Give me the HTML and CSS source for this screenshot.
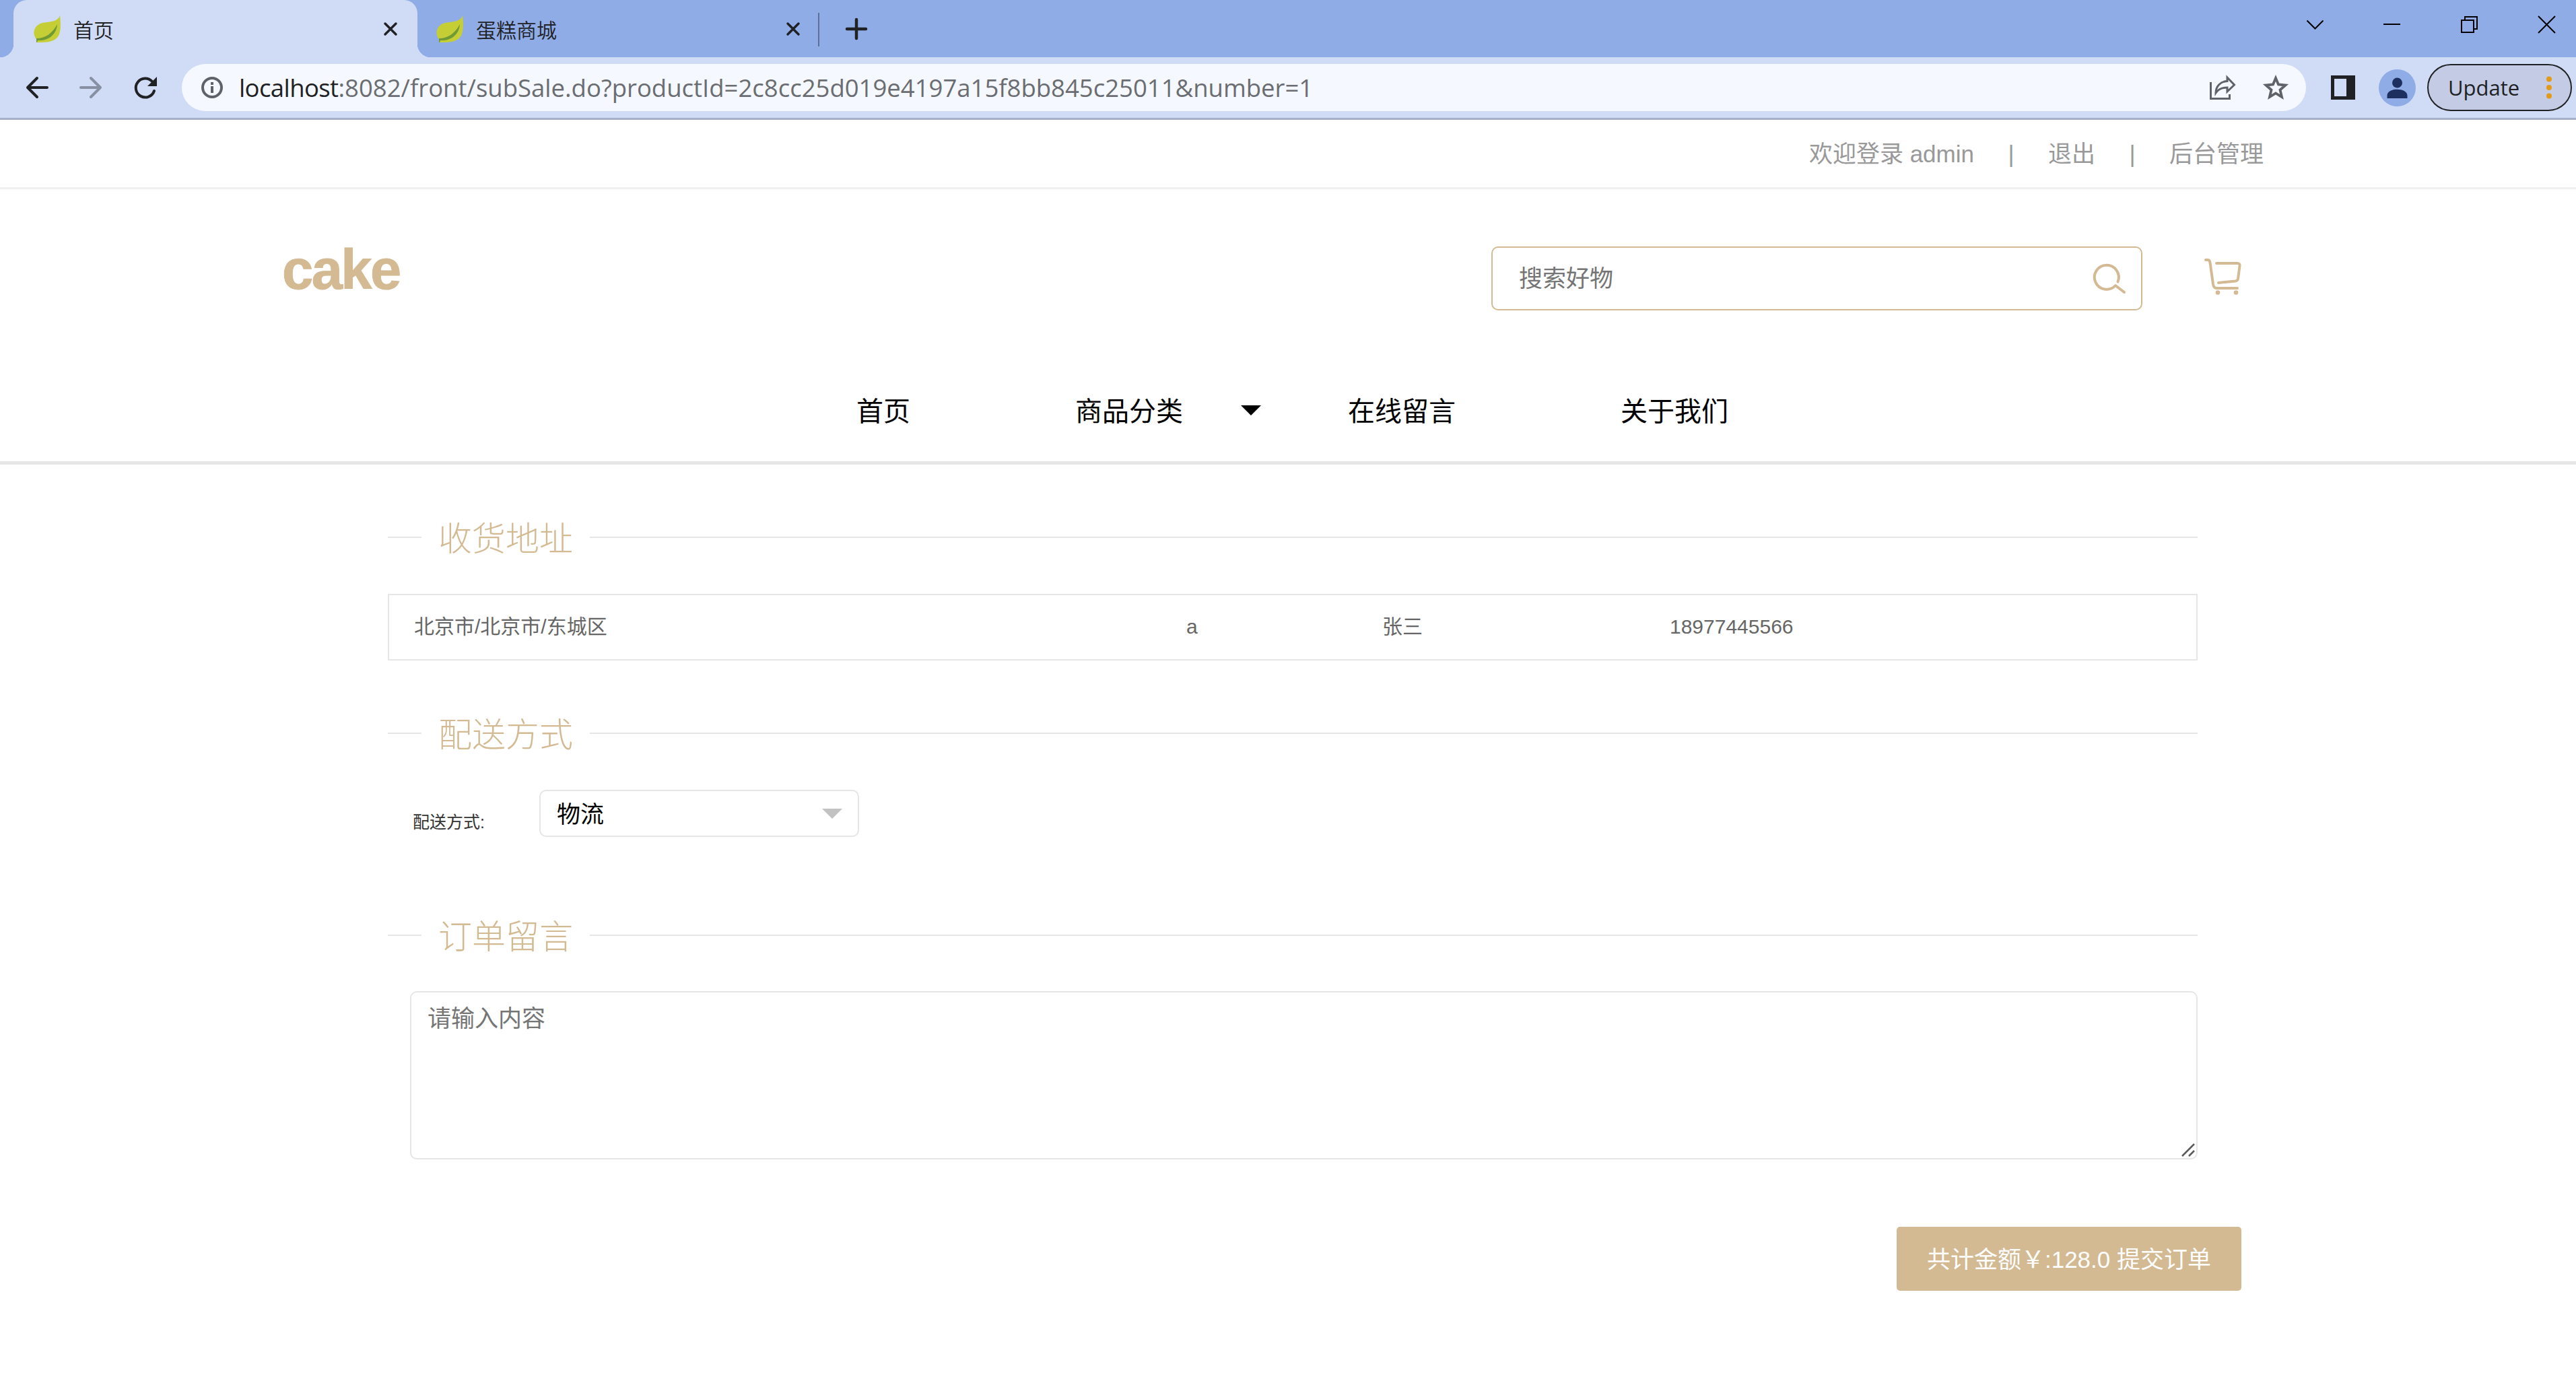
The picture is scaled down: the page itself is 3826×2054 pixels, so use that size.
FILE: index.html
```
<!DOCTYPE html>
<html lang="zh-CN">
<head>
    <meta charset="UTF-8">
    <title>首页</title>
    <link rel="stylesheet" href="styles.css">
</head>
<body>

<!-- browser window -->
<div class="tabs">
    <div class="tab active">
        <svg class="leaf" viewBox="0 0 40 40"><path d="M39 0C36 9 26 9 13 11C1 14-3 26 4 35L5 40C18 40 31 40 37 30C41 22 40 10 39 0Z" fill="#c5cf35"/><path d="M4 34C18 34 28 26 35 13C34 29 21 38 6 37L5 40L4 40Z" fill="#6f9a35"/></svg>
        <span class="tab-title">首页</span>
        <svg class="tab-close" viewBox="0 0 20 20"><path d="M2 2L18 18M18 2L2 18"/></svg>
    </div>
    <div class="tab">
        <svg class="leaf" viewBox="0 0 40 40"><path d="M39 0C36 9 26 9 13 11C1 14-3 26 4 35L5 40C18 40 31 40 37 30C41 22 40 10 39 0Z" fill="#c5cf35"/><path d="M4 34C18 34 28 26 35 13C34 29 21 38 6 37L5 40L4 40Z" fill="#6f9a35"/></svg>
        <span class="tab-title">蛋糕商城</span>
        <svg class="tab-close" viewBox="0 0 20 20"><path d="M2 2L18 18M18 2L2 18"/></svg>
    </div>
    <div class="tab-line"></div>
    <svg class="new-tab" viewBox="0 0 32 32"><path d="M16 2V30M2 16H30"/></svg>
    <div class="window-buttons">
        <svg viewBox="0 0 25 25"><path d="M1.500 6.500L13.500 18.500L25.500 6.500"/></svg>
        <svg viewBox="0 0 25 25"><path d="M0 12H25"/></svg>
        <svg viewBox="0 0 25 25"><path d="M1 6H19V24H1ZM6 6V1H24V19H19"/></svg>
        <svg viewBox="0 0 25 25"><path d="M0 0L25 25M25 0L0 25"/></svg>
    </div>
</div>

<div class="toolbar">
    <svg class="tool" viewBox="0 0 32 32"><path d="M31 16H2M16 2L2 16L16 30"/></svg>
    <svg class="tool disabled" viewBox="0 0 32 32"><path d="M1 16H30M16 2L30 16L16 30"/></svg>
    <svg class="tool reload" viewBox="0 0 34 32"><path d="M30 21A14 14 0 1 1 27 7"/><path class="solid" d="M34 0V14H20Z"/></svg>
    <div class="address">
        <svg class="info" viewBox="0 0 32 32"><circle cx="16" cy="16" r="14"/><path d="M16 14V24M16 8V12"/></svg>
        <div class="url"><span class="host">localhost</span>:8082/front/subSale.do?productId=2c8cc25d019e4197a15f8bb845c25011&amp;number=1</div>
        <svg class="share" viewBox="0 0 38 36"><path d="M1.500 10V34.500H29.500V28"/><path d="M26 3L36.500 14L26 24V18C19 18 13 20 9 26C9 16 16 9 26 8.500Z"/></svg>
        <svg class="star" viewBox="0 0 36 36"><path d="M18 4L22 13.500L32.500 14.500L24.500 21.500L27 32L18 26.500L9 32L11.500 21.500L3.500 14.500L14 13.500Z"/></svg>
    </div>
    <svg class="panel" viewBox="0 0 36 36"><path fill-rule="evenodd" d="M0 0H36V36H0ZM5 5V31H23V5Z"/></svg>
    <svg class="avatar" viewBox="0 0 55 55"><circle cx="27.500" cy="27.500" r="27.500" fill="#90ace7"/><circle cx="27.500" cy="20" r="7.500" fill="#1d2f5e"/><path d="M12.500 43V39C12.500 26.500 42.500 26.500 42.500 39V43Z" fill="#1d2f5e"/></svg>
    <div class="update">
        <span>Update</span>
        <svg class="dots" viewBox="0 0 8 34"><circle cx="4" cy="4.500" r="4"/><circle cx="4" cy="17" r="4"/><circle cx="4" cy="29.500" r="4"/></svg>
    </div>
</div>

<!-- shop page -->
<div class="topbar">
    <span>欢迎登录 admin</span>
    <span class="bar">|</span>
    <span>退出</span>
    <span class="bar">|</span>
    <span>后台管理</span>
</div>

<div class="header">
    <div class="logo">cake</div>
    <div class="search">
        <input type="text" placeholder="搜索好物">
        <svg viewBox="0 0 46 44"><path d="M34.500 27.500A18 18 0 1 0 31 33L44 43" transform="translate(1 -1)"/></svg>
    </div>
    <svg class="cart" viewBox="0 0 56 54"><path d="M2 2H5Q8 2 8.500 6L13 38Q14 44 18 44H49M18 7H49Q53 7 52.500 11L50 30Q49.500 33 46 33.500L21 36"/><circle cx="20" cy="50.500" r="3.300"/><circle cx="47" cy="50.500" r="3.300"/></svg>
</div>

<div class="nav">
    <span class="nav-home">首页</span>
    <span class="nav-sort">商品分类</span>
    <i class="arrow"></i>
    <span class="nav-msg">在线留言</span>
    <span>关于我们</span>
</div>

<form class="order">
    <div class="title"><span>收货地址</span></div>
    <div class="addr">
        <span class="area">北京市/北京市/东城区</span>
        <span class="street">a</span>
        <span class="name">张三</span>
        <span>18977445566</span>
    </div>

    <div class="title title-way"><span>配送方式</span></div>
    <div class="way">
        <label for="way">配送方式:</label>
        <div class="select-box">
            <select id="way" name="way">
                <option>物流</option>
            </select>
            <i class="arrow"></i>
        </div>
    </div>

    <div class="title title-msg"><span>订单留言</span></div>
    <div class="message">
        <textarea name="message" placeholder="请输入内容"></textarea>
        <svg class="grip" viewBox="0 0 20 20"><path d="M1 19L19 1M11 19L19 11"/></svg>
    </div>

    <button class="submit" type="button">共计金额￥:128.0 提交订单</button>
</form>

</body>
</html>
```
FILE: styles.css
```
* {
    box-sizing: border-box;
}

body {
    margin: 0;
    background: #fff;
    font-family: "Liberation Sans", "Noto Sans CJK SC", sans-serif;
    font-size: 35px;
}

svg {
    display: block;
    flex: none;
    fill: none;
    overflow: visible;
}

/* browser */
.tabs {
    display: flex;
    height: 85px;
    padding-left: 20px;
    background: #90ace7;
    color: #202124;
    font-size: 30px;
}

.tab {
    display: flex;
    align-items: center;
    position: relative;
    width: 595px;
    padding: 0 27px 0 28px;
}

.tab.active {
    width: 600px;
    padding: 0 30px;
    border-radius: 20px 20px 0 0;
    background: #d0dbf5;
}

/* curved feet of the active tab */
.tab.active::before,
.tab.active::after {
    content: "";
    position: absolute;
    bottom: 0;
    left: -20px;
    width: 20px;
    height: 20px;
    background: radial-gradient(circle at 0 0, #90ace7 20px, #d0dbf5 20.500px);
}

.tab.active::after {
    left: 600px;
    background: radial-gradient(circle at 100% 0, #90ace7 20px, #d0dbf5 20.500px);
}

.leaf {
    width: 40px;
    height: 40px;
}

.tab-title {
    flex: 1;
    margin-left: 19px;
    line-height: 40px;
    font-family: "Noto Sans CJK SC", sans-serif;
    font-weight: 350;
}

.tab-close {
    width: 20px;
    height: 20px;
    stroke: #202124;
    stroke-width: 3.500;
    stroke-linecap: round;
}

.tab-line {
    width: 2px;
    height: 50px;
    margin-top: 19px;
    background: #5d6f98;
}

.new-tab {
    width: 32px;
    height: 32px;
    margin: 27px 0 0 39px;
    stroke: #202124;
    stroke-width: 4.500;
    stroke-linecap: round;
}

.window-buttons {
    display: flex;
    gap: 90px;
    margin: 24px 31px 0 auto;
}

.window-buttons svg {
    width: 25px;
    height: 25px;
    stroke: #000;
    stroke-width: 2;
}

.toolbar {
    display: flex;
    align-items: center;
    height: 93px;
    padding: 0 6px 0 39px;
    border-bottom: 3px solid #a6b0c8;
    background: #d0dbf5;
    color: #202124;
}

.tool {
    width: 32px;
    height: 32px;
    margin-right: 48px;
    stroke: #202124;
    stroke-width: 4;
    stroke-linecap: round;
    stroke-linejoin: round;
}

.disabled {
    stroke: #878fa2;
}

.reload {
    width: 34px;
    margin-right: 37px;
}

.solid {
    fill: #202124;
    stroke: none;
}

.address {
    display: flex;
    align-items: center;
    width: 3155px;
    height: 70px;
    padding: 0 27px 0 29px;
    border-radius: 35px;
    background: #f5f8fe;
}

.info {
    width: 32px;
    height: 32px;
    stroke: #5f6368;
    stroke-width: 4;
}

.url {
    flex: 1;
    margin-left: 24px;
    color: #6a6d71;
    font-family: "Open Sans", sans-serif;
    font-size: 36.500px;
    line-height: 50px;
    white-space: nowrap;
}

.host {
    color: #202124;
    letter-spacing: -0.600px;
}

.share {
    width: 38px;
    height: 36px;
    margin-right: 42px;
    stroke: #5f6368;
    stroke-width: 3;
}

.star {
    width: 36px;
    height: 36px;
    stroke: #5f6368;
    stroke-width: 3.800;
}

.panel {
    width: 36px;
    height: 36px;
    margin-left: 37px;
    fill: #202124;
}

.avatar {
    width: 55px;
    height: 55px;
    margin-left: 35px;
}

.update {
    display: flex;
    align-items: center;
    justify-content: space-between;
    width: 215px;
    height: 70px;
    margin-left: 17px;
    padding: 0 28px 0 29px;
    border: 2.500px solid #202124;
    border-radius: 35px;
    background: #c3cce4;
    font-family: "Open Sans", sans-serif;
    font-size: 31px;
}

.dots {
    width: 8px;
    height: 34px;
    fill: #e29a1b;
}

/* header */
.topbar {
    display: flex;
    justify-content: flex-end;
    height: 103px;
    padding: 26px 464px 0 0;
    border-bottom: 3px solid #f0f0f0;
    color: #999;
    line-height: 50px;
}

.bar {
    width: 110px;
    text-align: center;
}

.header {
    display: flex;
    height: 275px;
    padding: 85px 496px 0 419px;
}

.logo {
    height: 90px;
    margin-top: -10px;
    color: #d3ba93;
    font-size: 83px;
    font-weight: bold;
    line-height: 90px;
    letter-spacing: -2.500px;
    -webkit-text-stroke: 1px #d3ba93;
}

.search {
    display: flex;
    align-items: center;
    width: 967px;
    height: 95px;
    margin-left: auto;
    padding: 0 24px 0 39px;
    border: 2px solid #d3ba93;
    border-radius: 10px;
}

input,
select,
textarea {
    border: none;
    outline: none;
    background: none;
    font: inherit;
}

.search input {
    flex: 1;
    height: 60px;
    padding: 1px 0 0;
}

::placeholder {
    color: #757575;
    opacity: 1;
}

.search svg {
    width: 46px;
    height: 44px;
    stroke: #d3ba93;
    stroke-width: 4;
    stroke-linecap: round;
    stroke-linejoin: round;
}

.cart {
    width: 56px;
    height: 54px;
    margin: 18px 0 0 92px;
    stroke: #d3ba93;
    stroke-width: 4;
    stroke-linecap: round;
    stroke-linejoin: round;
}

.cart circle {
    fill: #d3ba93;
    stroke: none;
}

.nav {
    display: flex;
    height: 134px;
    padding: 25px 0 0 1272px;
    border-bottom: 5px solid #e6e6e6;
    font-size: 40px;
    line-height: 60px;
}

.nav-home {
    width: 325px;
}

.nav-sort {
    width: 246px;
}

.arrow {
    height: 0;
    border: 15px solid transparent;
    border-top-color: #000;
    border-bottom: none;
}

.nav .arrow {
    margin: 21px 129px 0 0;
}

.nav-msg {
    width: 405px;
}

/* order form */
.order {
    display: flex;
    flex-direction: column;
    width: 2688px;
    margin: 78px 0 0 576px;
}

.title {
    display: flex;
    align-items: center;
    gap: 25px;
    height: 60px;
    color: #d3ba93;
    font-family: "Noto Sans CJK SC", sans-serif;
    font-size: 50px;
    font-weight: 300;
    line-height: 60px;
}

.title span {
    padding-bottom: 4px;
    line-height: 56px;
}

.title::before,
.title::after {
    content: "";
    width: 50px;
    height: 2px;
    background: #e6e6e6;
}

.title::after {
    flex: 1;
}

.addr {
    display: flex;
    height: 99px;
    margin-top: 54px;
    padding-left: 37px;
    border: 2px solid #e6e6e6;
    color: #666;
    font-size: 30px;
    line-height: 94px;
}

.area {
    width: 1147px;
}

.street {
    width: 291px;
}

.name {
    width: 427px;
}

.title-way {
    margin-top: 78px;
}

.way {
    display: flex;
    margin-top: 54px;
    padding-left: 37px;
}

.way label {
    width: 188px;
    margin-top: 28px;
    color: #333;
    font-size: 25px;
    line-height: 40px;
}

.select-box {
    display: flex;
    align-items: center;
    width: 475px;
    height: 70px;
    padding: 0 23px 0 24px;
    border: 2px solid #e6e6e6;
    border-radius: 10px;
}

.select-box select {
    flex: 1;
    height: 60px;
    padding: 3px 0 0;
    appearance: none;
    color: #000;
}

.select-box .arrow {
    border-top-color: #c2c2c2;
}

.title-msg {
    margin-top: 116px;
}

.message {
    position: relative;
    margin: 53px 0 0 33px;
}

textarea {
    display: block;
    width: 2655px;
    height: 250px;
    padding: 14px 24px;
    border: 2px solid #e6e6e6;
    border-radius: 10px;
    line-height: 50px;
    resize: none;
}

.grip {
    position: absolute;
    right: 4px;
    bottom: 4px;
    width: 20px;
    height: 20px;
    stroke: #5b5b5b;
    stroke-width: 2.500;
}

.submit {
    width: 512px;
    height: 95px;
    margin: 100px 0 0 2241px;
    padding: 0 0 4px;
    border: none;
    border-radius: 5px;
    background: #d3ba93;
    color: #fff;
    font: inherit;
    white-space: nowrap;
}
```
